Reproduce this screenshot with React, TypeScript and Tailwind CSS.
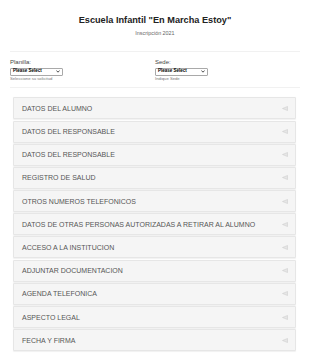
import React from 'react'

const sections = [
  'DATOS DEL ALUMNO',
  'DATOS DEL RESPONSABLE',
  'DATOS DEL RESPONSABLE',
  'REGISTRO DE SALUD',
  'OTROS NUMEROS TELEFONICOS',
  'DATOS DE OTRAS PERSONAS AUTORIZADAS A RETIRAR AL ALUMNO',
  'ACCESO A LA INSTITUCION',
  'ADJUNTAR DOCUMENTACION',
  'AGENDA TELEFONICA',
  'ASPECTO LEGAL',
  'FECHA Y FIRMA',
]

function FakeSelect() {
  return (
    <div className="flex h-[8px] w-[53px] items-center justify-between rounded-[1px] border border-[#a9a9a9] bg-white px-[2px]">
      <span className="text-[4.5px] font-bold leading-none text-black">Please Select</span>
      <svg width="4" height="3" viewBox="0 0 4 3">
        <path d="M0.4 0.5 L2 2.2 L3.6 0.5" fill="none" stroke="#222" strokeWidth="0.8" />
      </svg>
    </div>
  )
}

function Field({ label, help }: { label: string; help: string }) {
  return (
    <div className="flex flex-col">
      <span className="text-[6px] leading-none text-[#444]">{label}</span>
      <div className="mt-[3px]">
        <FakeSelect />
      </div>
      <span className="mt-[1.5px] text-[4.2px] leading-none text-[#777]">{help}</span>
    </div>
  )
}

function Arrow() {
  return (
    <svg width="6" height="5" viewBox="0 0 6 5">
      <path d="M0.5 2.5 L5.5 0.5 L5.5 4.5 Z" fill="#e6e6e6" stroke="#cfcfcf" strokeWidth="0.6" />
    </svg>
  )
}

export default function App() {
  return (
    <div className="h-[354px] w-[310px] overflow-hidden bg-white px-[10px] font-['Liberation_Sans',Arial,sans-serif]">
      <div className="flex flex-col items-center pt-[16px]">
        <h1 className="text-[9.2px] font-bold leading-none text-[#222]">Escuela Infantil "En Marcha Estoy"</h1>
        <p className="mt-[6px] text-[5.4px] leading-none text-[#666]">Inscripción 2021</p>
      </div>
      <div className="mt-[14px] h-px bg-[#f1f1f1]" />
      <div className="grid grid-cols-2 pt-[7px]">
        <Field label="Planilla:" help="Seleccione su solicitud" />
        <Field label="Sede:" help="Indique Sede" />
      </div>
      <div className="mt-[6px] h-px bg-[#f1f1f1]" />
      <div className="mt-[9px] flex flex-col gap-[1.2px] px-[3px] pr-[4px]">
        {sections.map((s, i) => (
          <div
            key={i}
            className="flex h-[22px] items-center justify-between rounded-[1px] border border-[#e6e6e6] bg-[#f5f5f5] pl-[8px] pr-[7px] shadow-[0_0.5px_1px_rgba(0,0,0,0.06)]"
          >
            <span className="text-[7px] leading-none text-[#555]">{s}</span>
            <Arrow />
          </div>
        ))}
      </div>
    </div>
  )
}
